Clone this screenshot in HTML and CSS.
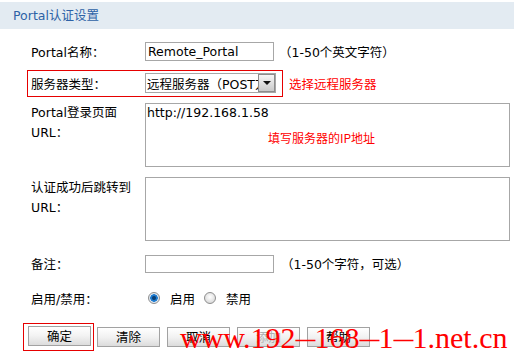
FILE: index.html
```html
<!DOCTYPE html>
<html>
<head>
<meta charset="utf-8">
<link rel="stylesheet" href="styles.css">
</head>
<body>
<div class="header">Portal认证设置</div>
<div class="form">
  <div class="row r1">
    <span class="lbl">Portal名称：</span>
    <input class="text" type="text" value="Remote_Portal">
    <span class="hint">（1-50个英文字符）</span>
  </div>
  <div class="row r2">
    <div class="redbox">
      <span class="lbl">服务器类型：</span>
      <div class="select"><span class="sel-text">远程服务器（POST方式）</span><span class="arrow"></span></div>
    </div>
    <span class="note">选择远程服务器</span>
  </div>
  <div class="row top r3">
    <span class="lbl lbl2">Portal登录页面<br>URL：</span>
    <div class="ta-wrap">
      <textarea class="ta">http://192.168.1.58</textarea>
      <span class="ta-note">填写服务器的IP地址</span>
    </div>
  </div>
  <div class="row top r4">
    <span class="lbl lbl2">认证成功后跳转到<br>URL：</span>
    <div class="ta-wrap"><textarea class="ta"></textarea></div>
  </div>
  <div class="row r5">
    <span class="lbl">备注：</span>
    <input class="text short" type="text" value="">
    <span class="hint hint2">（1-50个字符，可选）</span>
  </div>
  <div class="row r6">
    <span class="lbl">启用/禁用：</span>
    <span class="radio on"></span><span class="rlbl">启用</span>
    <span class="radio"></span><span class="rlbl">禁用</span>
  </div>
  <div class="row r7">
    <div class="redbox btnbox"><button class="btn">确定</button></div>
    <button class="btn b2">清除</button>
    <button class="btn">取消</button>
    <button class="btn" disabled>添加</button>
    <button class="btn">帮助</button>
  </div>
</div>
<div class="watermark">www.192<span class="d">–</span>168<span class="d">–</span>1<span class="d">–</span>1.net.cn</div>
</body>
</html>
```
FILE: styles.css
```css
* { box-sizing: border-box; }
body {
  margin: 0;
  width: 514px;
  height: 357px;
  overflow: hidden;
  position: relative;
  background: #fff;
  color: #000;
  font-family: "DejaVu Sans", "Noto Sans CJK SC", sans-serif;
  font-size: 12.5px;
}
.header {
  margin-top: 2px;
  height: 27px;
  line-height: 27px;
  background: #e3ebf2;
  color: #2d62a6;
  padding-left: 13px;
}
.form { padding-left: 31px; }
.row { display: flex; align-items: center; }
.row.top { align-items: flex-start; }
.lbl { width: 114px; flex: none; white-space: nowrap; }
.lbl2 { line-height: 20px; }
.text {
  width: 129px;
  height: 19px;
  border: 1px solid #a7a7a7;
  padding: 0 2px;
  margin: 0;
  font-family: "DejaVu Sans", "Noto Sans CJK SC", sans-serif;
  font-size: 12.5px;
  color: #000;
  outline: none;
}
.short { height: 18px; }
.hint { margin-left: 5px; white-space: nowrap; }
.hint2 { margin-left: 7px; }
.r1 { margin-top: 13px; }
.r2 { margin-top: 9px; }
.redbox {
  display: flex;
  align-items: center;
  margin-left: -4px;
  border: 1px solid #e60000;
  padding: 2px 5px 3px 3px;
  width: 256px;
  height: 27px;
}
.select {
  width: 131px;
  height: 20px;
  border: 1px solid #a7a7a7;
  display: flex;
  align-items: center;
  overflow: hidden;
}
.sel-text {
  flex: 1;
  overflow: hidden;
  white-space: nowrap;
  padding-left: 1px;
}
.arrow {
  flex: none;
  width: 17px;
  height: 18px;
  border: 1px solid #8c8c8c;
  background: linear-gradient(#f6f6f6, #c9c9c9);
  position: relative;
}
.arrow::after {
  content: "";
  position: absolute;
  left: 4px;
  top: 6px;
  border-left: 4px solid transparent;
  border-right: 4px solid transparent;
  border-top: 4px solid #111;
}
.note { color: #f00; margin-left: 6px; white-space: nowrap; }
.r3 { margin-top: 6px; }
.r4 { margin-top: 10px; }
.r4 .lbl2 { padding-top: 1px; }
.ta-wrap { position: relative; }
.ta {
  display: block;
  width: 365px;
  height: 64px;
  border: 1px solid #a7a7a7;
  margin: 0;
  padding: 1px 1px;
  resize: none;
  font-family: "DejaVu Sans", "Noto Sans CJK SC", sans-serif;
  font-size: 12.5px;
  line-height: 16px;
  color: #000;
  outline: none;
  overflow: hidden;
}
.ta-note {
  position: absolute;
  left: 123px;
  top: 26px;
  color: #f00;
  font-size: 12px;
  font-family: "Noto Sans CJK SC", sans-serif;
  white-space: nowrap;
}
.r5 { margin-top: 13px; }
.r6 { margin-top: 15px; height: 20px; }
.radio {
  flex: none;
  width: 12px;
  height: 12px;
  border-radius: 50%;
  border: 1px solid #8e8e8e;
  background: radial-gradient(circle at 50% 40%, #ffffff, #cfcfcf);
  margin-left: 3px;
}
.radio.on {
  background: radial-gradient(circle, #0b3f73 0 1.5px, #1d7bd0 2.5px 3.5px, #dfe6ee 4px);
}
.rlbl { margin-left: 10px; margin-right: 6px; }
.r7 { margin-top: 15px; }
.btnbox {
  margin-left: -8px;
  width: auto;
  height: 28px;
  padding: 2px 2px 4px 4px;
}
.btn {
  width: 63px;
  height: 20px;
  margin: 0 0 0 7px;
  padding: 0;
  border: 1px solid #a2a2a2;
  border-radius: 0;
  background: linear-gradient(#ffffff, #f2f2f2 50%, #dcdcdc);
  font-family: "Noto Sans CJK SC", "DejaVu Sans", sans-serif;
  font-size: 12.5px;
  color: #000;
  line-height: 18px;
}
.btnbox .btn { margin-left: 0; }
.btn.b2 { margin-left: 3px; }
.btn:disabled { color: #b0b0b0; }
.watermark {
  position: absolute;
  left: 180px;
  top: 321px;
  font-family: "Liberation Serif", serif;
  font-size: 30px;
  line-height: 34px;
  color: #f00;
  white-space: nowrap;
}
.watermark .d { display: inline-block; transform: scaleX(1.3); margin: 0 2px; }
```
